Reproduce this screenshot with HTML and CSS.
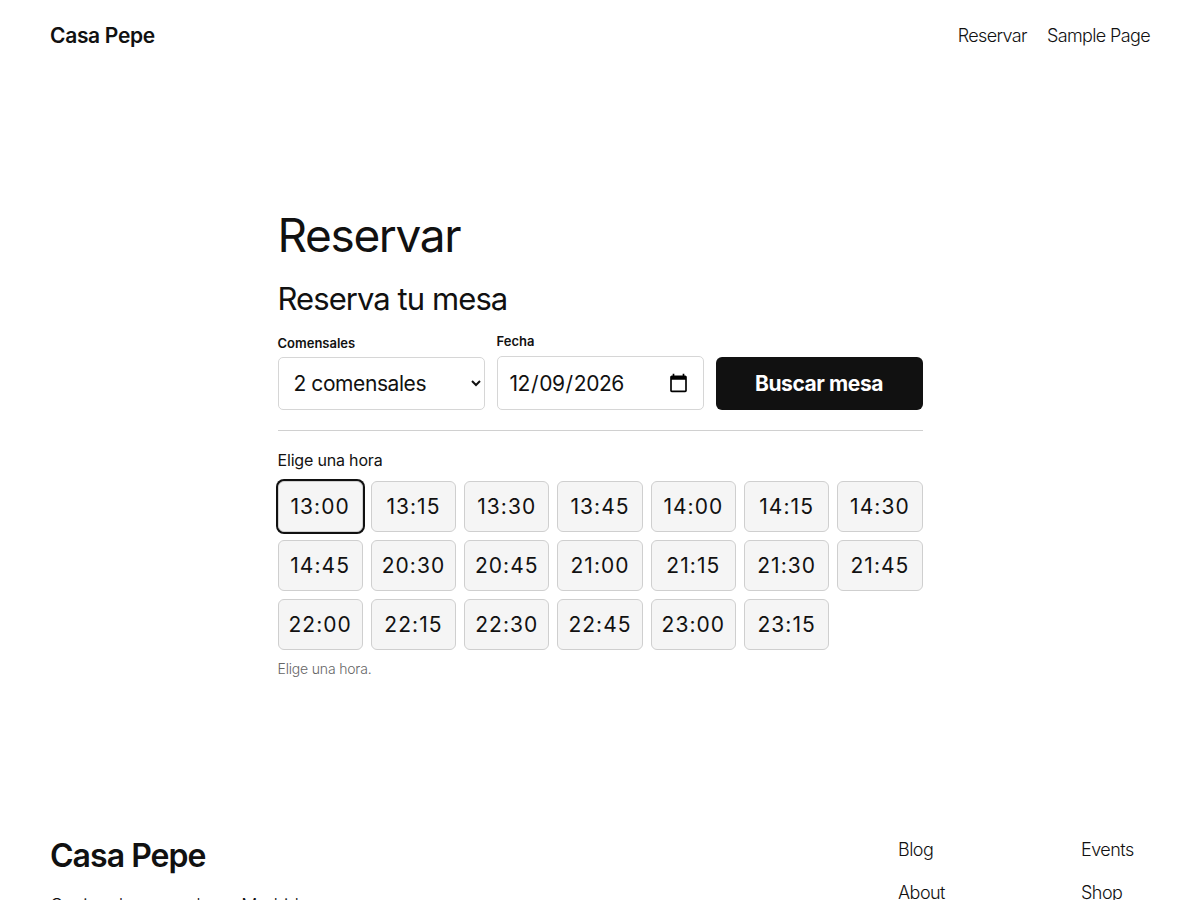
FILE: index.html
```html
<!DOCTYPE html>
<html lang="es">
<head>
<meta charset="utf-8">
<title>Reservar – Casa Pepe</title>
<link rel="stylesheet" href="styles.css">
</head>
<body>
<header class="site-header">
  <a class="site-title" href="#">Casa Pepe</a>
  <nav class="site-nav">
    <a href="#">Reservar</a>
    <a href="#">Sample Page</a>
  </nav>
</header>

<main class="content">
  <h1 class="page-title">Reservar</h1>
  <section class="booking">
    <h2 class="booking-title">Reserva tu mesa</h2>
    <form class="booking-form">
      <div class="field field-select">
        <label for="guests">Comensales</label>
        <select id="guests" class="control">
          <option>1 comensal</option>
          <option selected>2 comensales</option>
          <option>3 comensales</option>
          <option>4 comensales</option>
        </select>
      </div>
      <div class="field field-date">
        <label for="date">Fecha</label>
        <input id="date" class="control" type="date" value="2026-12-09">
      </div>
      <div class="field field-action">
        <button type="button" class="search-btn">Buscar mesa</button>
      </div>
    </form>
    <hr class="divider">
    <p class="slots-label">Elige una hora</p>
    <div class="slots">
      <button type="button" class="slot is-selected">13:00</button>
      <button type="button" class="slot">13:15</button>
      <button type="button" class="slot">13:30</button>
      <button type="button" class="slot">13:45</button>
      <button type="button" class="slot">14:00</button>
      <button type="button" class="slot">14:15</button>
      <button type="button" class="slot">14:30</button>
      <button type="button" class="slot">14:45</button>
      <button type="button" class="slot">20:30</button>
      <button type="button" class="slot">20:45</button>
      <button type="button" class="slot">21:00</button>
      <button type="button" class="slot">21:15</button>
      <button type="button" class="slot">21:30</button>
      <button type="button" class="slot">21:45</button>
      <button type="button" class="slot">22:00</button>
      <button type="button" class="slot">22:15</button>
      <button type="button" class="slot">22:30</button>
      <button type="button" class="slot">22:45</button>
      <button type="button" class="slot">23:00</button>
      <button type="button" class="slot">23:15</button>
    </div>
    <p class="slots-hint">Elige una hora.</p>
  </section>
</main>

<footer class="site-footer">
  <div class="footer-brand">
    <a class="footer-title" href="#">Casa Pepe</a>
    <p class="footer-tagline">Cocina de mercado en Madrid</p>
  </div>
  <nav class="footer-nav">
    <ul class="footer-col">
      <li><a href="#">Blog</a></li>
      <li><a href="#">About</a></li>
    </ul>
    <ul class="footer-col">
      <li><a href="#">Events</a></li>
      <li><a href="#">Shop</a></li>
    </ul>
  </nav>
</footer>
</body>
</html>
```

FILE: styles.css
```css
* {
  box-sizing: border-box;
}

html, body {
  margin: 0;
  padding: 0;
}

body {
  font-family: Inter, "Noto Sans", sans-serif;
  color: #111;
  background: #fff;
  font-size: 18px;
  letter-spacing: -0.01em;
}

a {
  color: inherit;
  text-decoration: none;
}

/* Header */
.site-header {
  display: flex;
  justify-content: space-between;
  align-items: center;
  height: 70px;
  padding: 0 50px;
}

.site-title {
  font-weight: 600;
  font-size: 21px;
  letter-spacing: -0.015em;
}

.site-nav {
  display: flex;
  gap: 20px;
  font-size: 18px;
  font-weight: 300;
  letter-spacing: -0.035em;
}

/* Main */
.content {
  width: 645px;
  margin: 0 auto;
  padding-top: 139px;
  min-height: 760px;
}

.page-title {
  margin: 0;
  font-size: 46px;
  font-weight: 400;
  line-height: 1.15;
  letter-spacing: -0.03em;
}

.booking-title {
  margin: 18px 0 0;
  font-size: 31px;
  font-weight: 400;
  line-height: 1.2;
  letter-spacing: -0.03em;
}

.booking-form {
  display: grid;
  grid-template-columns: repeat(3, 1fr);
  gap: 12px;
  align-items: end;
  margin-top: 16px;
}

.field {
  display: flex;
  flex-direction: column;
}

.field label {
  font-size: 13px;
  font-weight: 600;
  margin-bottom: 6px;
  letter-spacing: 0;
}

.field-date label {
  margin-bottom: 7px;
}

.control {
  height: 53px;
  border: 1px solid #d6d6d6;
  border-radius: 5px;
  background: #fff;
  font-family: inherit;
  font-size: 21px;
  font-weight: 400;
  color: #111;
  letter-spacing: -0.02em;
}

select.control {
  padding: 0 6px 0 11px;
}

input.control {
  height: 54px;
  padding: 0 12px 0 11px;
}

.search-btn {
  height: 53px;
  width: 100%;
  border: 0;
  border-radius: 6px;
  background: #111;
  color: #fff;
  font-family: inherit;
  font-size: 21px;
  font-weight: 700;
  letter-spacing: -0.02em;
  cursor: pointer;
}

.divider {
  border: 0;
  border-top: 1px solid #d0d0d0;
  margin: 20px 0 0;
}

.slots-label {
  margin: 19px 0 0;
  font-size: 16px;
  font-weight: 400;
  line-height: 20px;
}

.slots {
  display: grid;
  grid-template-columns: repeat(7, 85.3px);
  gap: 8px;
  margin-top: 11px;
}

.slot {
  height: 51px;
  border: 1px solid #cfcfcf;
  border-radius: 6px;
  background: #f5f5f5;
  color: #111;
  font-family: inherit;
  font-size: 21px;
  font-weight: 400;
  letter-spacing: 0.05em;
  padding: 0;
  cursor: pointer;
}

.slot.is-selected {
  box-shadow: 0 0 0 2px #111;
}

.slots-hint {
  margin: 10px 0 0;
  font-size: 14px;
  color: #666;
  font-weight: 300;
}

/* Footer */
.site-footer {
  display: flex;
  justify-content: space-between;
  padding: 0 50px;
}

.footer-title {
  display: block;
  font-size: 32px;
  font-weight: 600;
  letter-spacing: -0.03em;
  line-height: 1.2;
  padding-top: 7px;
}

.footer-tagline {
  margin: 20px 0 0;
  font-size: 18px;
  font-weight: 300;
}

.footer-nav {
  display: flex;
  gap: 130px;
  margin-right: 16px;
  padding-top: 9px;
}

.footer-col {
  list-style: none;
  margin: 0;
  padding: 0;
  width: 53px;
  font-size: 18px;
  font-weight: 300;
  letter-spacing: -0.03em;
}

.footer-col li {
  line-height: 22px;
  margin-bottom: 21px;
}
```
